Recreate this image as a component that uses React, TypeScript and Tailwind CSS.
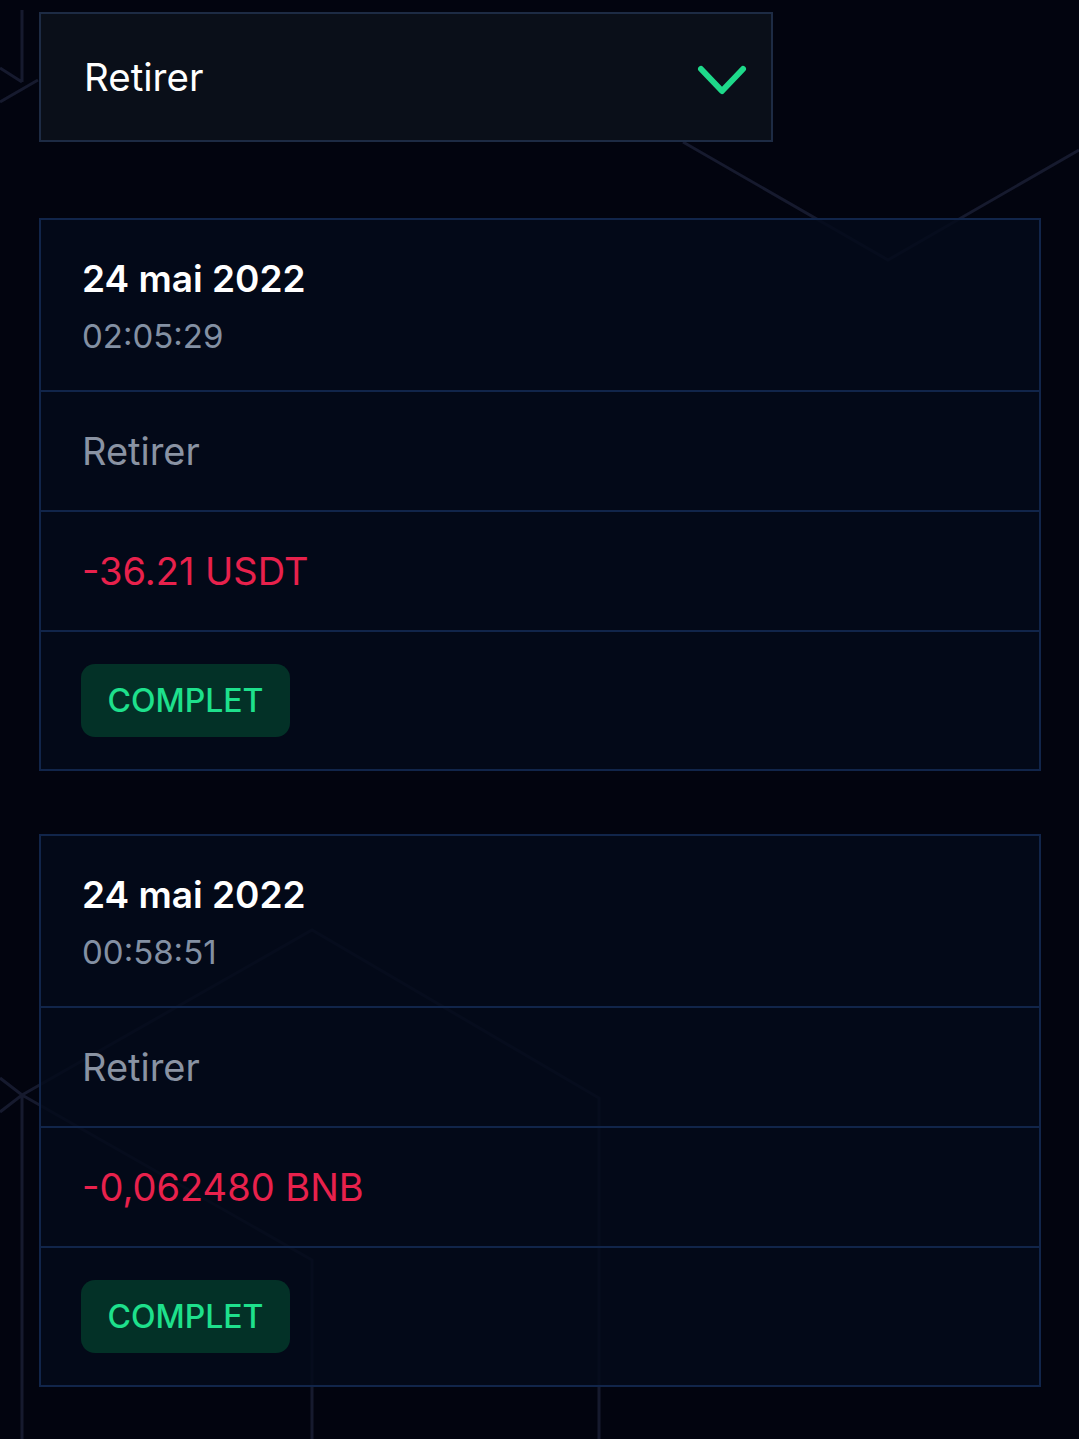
const rows = [
  { date: "24 mai 2022", time: "02:05:29", type: "Retirer", amount: "-36.21 USDT" },
  { date: "24 mai 2022", time: "00:58:51", type: "Retirer", amount: "-0,062480 BNB" },
];

function Backdrop() {
  return (
    <svg
      className="absolute inset-0 w-full h-full pointer-events-none"
      viewBox="0 0 1079 1439"
      preserveAspectRatio="none"
      fill="none"
      stroke="#161a2e"
      strokeWidth="3"
    >
      <path d="M22 10 V82 M0 102 L38 80 M0 68 L22 82" />
      <path d="M683 142 L888 260 L1079 150" />
      <path d="M0 1078 L22 1095 L312 930 L599 1098 V1439" />
      <path d="M0 1112 L22 1095 L312 1260 V1439 M22 1095 V1439" />
    </svg>
  );
}

function Chevron() {
  return (
    <svg width="50" height="32" viewBox="0 0 50 32" fill="none" className="mt-[5px]">
      <path
        d="M4 5 L25 27 L46 5"
        stroke="#1ed98a"
        strokeWidth="6"
        strokeLinecap="round"
        strokeLinejoin="round"
      />
    </svg>
  );
}

export default function App() {
  return (
    <div
      className="relative min-h-[1439px] w-full bg-[#02040f] overflow-hidden"
      style={{ fontFamily: "Inter, 'Noto Sans', sans-serif" }}
    >
      <Backdrop />

      <div className="relative flex flex-col pt-3 pl-[39px] pr-[38px]">
        <div className="w-[734px] h-[130px] bg-[#0a0f19] border-2 border-[#1d2b44] flex items-center justify-between pl-[43px] pr-[24px]">
          <span className="text-white text-[38.5px] leading-none">Retirer</span>
          <Chevron />
        </div>

        <div className="flex flex-col gap-[63px] mt-[76px]">
          {rows.map((r, i) => (
            <div
              key={i}
              className="border-2 border-[#11254a] bg-[#040a1a]/85 flex flex-col"
            >
              <div className="px-[41px] pt-[34px] pb-[32px] border-b-2 border-[#11254a]">
                <div className="text-white text-[37px] font-semibold leading-[50px]">
                  {r.date}
                </div>
                <div className="text-[#8390a3] text-[33px] leading-[44px] mt-[10px]">
                  {r.time}
                </div>
              </div>
              <div className="px-[41px] py-[34px] border-b-2 border-[#11254a]">
                <div className="text-[#8a93a3] text-[38px] leading-[50px]">
                  {r.type}
                </div>
              </div>
              <div className="px-[41px] py-[34px] border-b-2 border-[#11254a]">
                <div className="text-[#e8214c] text-[38px] leading-[50px]">
                  {r.amount}
                </div>
              </div>
              <div className="px-[40px] pt-[32px] pb-[32px]">
                <div className="inline-flex items-center justify-center w-[209px] h-[73px] rounded-[14px] bg-[#033127] text-[#1ee08c] text-[32px] font-medium">
                  COMPLET
                </div>
              </div>
            </div>
          ))}
        </div>
      </div>
    </div>
  );
}
